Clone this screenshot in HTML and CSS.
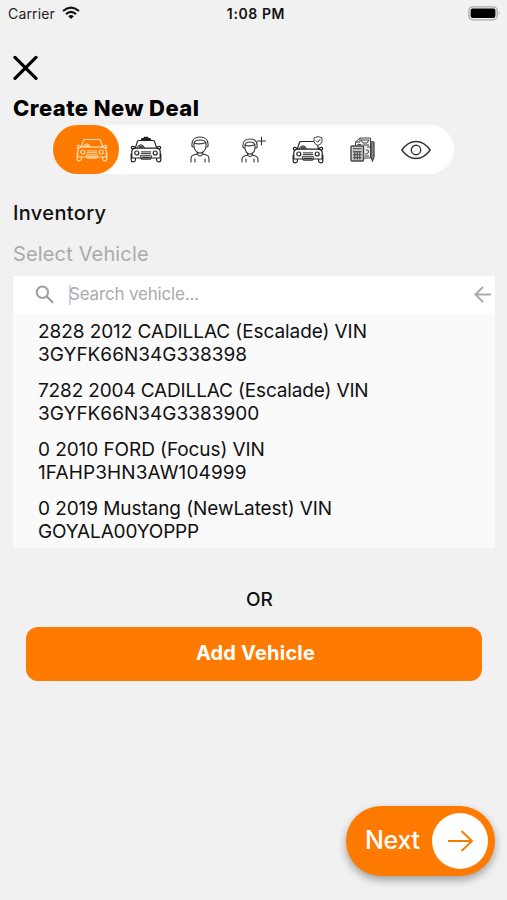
FILE: index.html
```html
<!DOCTYPE html>
<html lang="en">
<head>
<meta charset="utf-8">
<title>Create New Deal</title>
<link rel="stylesheet" href="styles.css">
</head>
<body>
<svg class="defs" aria-hidden="true">
  <symbol id="car" viewBox="0 0 32 24">
    <g fill="none" stroke="currentColor" stroke-linejoin="round" stroke-linecap="round">
      <path stroke-width="1.2" d="M5.2 9.4 7.4 2.6Q7.8 1.5 9 1.5H23Q24.2 1.5 24.6 2.6L26.8 9.4M5.4 9.2H26.6Q30.2 10 30.2 12.5V19H1.8V12.5Q1.8 10 5.4 9.2ZM1.2 15V21.2Q1.2 22.8 3.2 22.8T5.4 21.2V19M30.8 15V21.2Q30.8 22.8 28.8 22.8T26.6 21.2V19M5 8.2Q1.6 6.5 1.4 8.4T4 9.7M27 8.2Q30.4 6.5 30.6 8.4T28 9.7"/>
      <circle cx="6.8" cy="14" r="2" stroke-width="1.2"/><circle cx="25.2" cy="14" r="2" stroke-width="1.2"/>
      <path stroke-width="1" d="M11.3 12.9H20.7M11.3 14.7H20.7M10.5 16.8H21.5V17.8L20.7 20.2H11.3L10.5 17.8ZM12.5 18.4H19.5M7.2 8.8Q8 5.8 10.8 5.8T14.4 8.8M9.5 7.2H12.2M9.3 8.2H12.8"/>
    </g>
  </symbol>
</svg>
<div class="screen">
  <header class="status">
    <div class="carrier"><span>Carrier</span>
      <svg width="18" height="14" viewBox="0 0 18 14" fill="none" stroke="#111" stroke-width="2.1"><path d="M1 5Q9-1.8 17 5M4 8.1Q9 3.6 14 8.1"/><path d="M6.2 10.3Q9 7.8 11.8 10.3L9 13Z" fill="#111" stroke="none"/></svg>
    </div>
    <div class="clock">1:08 PM</div>
    <svg class="battery" width="33" height="15" viewBox="0 0 33 15"><rect x=".8" y=".8" width="28.4" height="13" rx="4" fill="none" stroke="#aaa" stroke-width="1.3"/><rect x="2.6" y="2.6" width="24.8" height="9.4" rx="2" fill="#000"/><path d="M30.8 5Q32.5 7.3 30.8 9.6Z" fill="#999"/></svg>
  </header>
  <main>
    <button class="close" aria-label="Close"><svg width="26" height="26" viewBox="0 0 26 26" stroke="#000" stroke-width="3.2" stroke-linecap="round"><path d="M2 2.4 23 23.4M23 2.4 2 23.4"/></svg></button>
    <h1>Create New Deal</h1>
    <nav class="steps">
      <div class="step active"><svg width="32" height="24"><use href="#car"/></svg></div>
      <div class="step"><svg width="32" height="28" viewBox="0 0 32 28"><use href="#car" y="3" width="32" height="24"/><path d="M10.5 4.8 11.5 2H13.5L14 .8H18L18.5 2H20.5L21.5 4.8Z" fill="#222"/></svg></div>
      <div class="step"><svg width="20" height="27" viewBox="0 0 20 27"><g class="person"><path d="M4 8Q4 4 10 4T16 8V10C16 14 13 17 10 17S4 14 4 10ZM4 7Q10 9 16 6.5M3 11Q1.6 11 2 8C2 3 6 1 10 1S18 3 18 8Q18.4 11 17 11M1 26V22Q1 20 3.5 19L7.2 18V16M19 26V22Q19 20 16.5 19L12.8 18V16M7 18Q10 22 13 18M5 23V26M15 23V26"/></g></svg></div>
      <div class="step"><svg width="26" height="27" viewBox="0 0 26 27"><g class="person"><path d="M4 10Q4 6 9 6T14 10V12C14 15 12 18 9 18S4 15 4 12ZM4 9Q9 11 14 8.5M3 12Q1.6 12 2 9C2 5 5 3 9 3S16 5 16 9Q16.4 12 15 12M1 26V23Q1 21 3.5 20L6.6 19V17M17 26V23Q17 21 14.5 20L11.4 19V17M6.5 19Q9 22 11.5 19M5 23V26M13 23V26M20.5 1V9M16.5 5H24.5"/></g></svg></div>
      <div class="step"><svg width="32" height="28" viewBox="0 0 32 28"><use href="#car" y="4" width="32" height="24"/><path d="M22 1.8 26 .6 30 1.8V5.5Q29.8 8 26 9.5Q22.2 8 22 5.5Z" fill="#fff" stroke="#444"/><path d="M24 4.5 25.6 6.2 28.3 3" fill="none" stroke="#333"/></svg></div>
      <div class="step"><svg width="25" height="25" viewBox="0 0 25 25" fill="none" stroke="#444" stroke-width="1"><path d="M5.5 9V5L10 1H20.5V21H14" fill="#eee"/><path d="M5.5 5H10V1M11 3H19L17 6H13ZM12.5 8H19M7.5 7.5H11M17 10H20M16 13Q19 12.5 18.5 15T15 17M15 19H19"/><rect x="1" y="9" width="12.5" height="15" rx="1" fill="#ccc" stroke-width="1.4"/><path d="M3 11.7H11.5M3 14.8H11.5M3 17.8H11.5M3 20.8H11.5M4.8 14V22.5M7.3 14V22.5M9.8 14V22.5" stroke-width="1.1"/><path d="M21 5.5Q22.5 3.5 24 5.5V20L22.5 24 21 20Z" fill="#888" stroke-width="1.2"/></svg></div>
      <div class="step"><svg width="30" height="20" viewBox="0 0 30 20" fill="none" stroke="#333" stroke-width="1.4"><path d="M.8 10Q7 1.5 15 1.5T29.2 10Q23 18.5 15 18.5T.8 10Z"/><circle cx="15" cy="10" r="4.7"/></svg></div>
    </nav>
    <h2>Inventory</h2>
    <p class="label">Select Vehicle</p>
    <section class="picker">
      <div class="search">
        <svg class="lens" width="20" height="20" viewBox="0 0 20 20" fill="none" stroke="#a0a0a0" stroke-width="2"><circle cx="7.4" cy="7.2" r="5.7"/><path d="M11.5 11.3 18 17.8" stroke-width="2.3"/></svg>
        <span class="caret"></span>
        <span class="placeholder">Search vehicle...</span>
        <svg class="back" width="18" height="18" viewBox="0 0 18 18" fill="none" stroke="#aaa" stroke-width="2"><path d="M17 8.5H2M9 1 1.5 8.5 9 16"/></svg>
      </div>
      <ul>
        <li><span class="tight">2828 2012 CADILLAC (Escalade) VIN</span><br>3GYFK66N34G338398</li>
        <li><span class="tighter">7282 2004 CADILLAC (Escalade) VIN</span><br>3GYFK66N34G3383900</li>
        <li><span class="tight">0 2010 FORD (Focus) VIN</span><br><span class="wide">1FAHP3HN3AW104999</span></li>
        <li><span class="tight">0 2019 Mustang (NewLatest) VIN</span><br><span class="tighter">GOYALA00YOPPP</span></li>
      </ul>
    </section>
    <p class="or">OR</p>
    <button class="add">Add Vehicle</button>
  </main>
  <button class="next"><span>Next</span><i><svg width="27" height="22" viewBox="0 0 27 22" fill="none" stroke="#f57c00" stroke-width="1.9"><path d="M1 11H25M14.5 1 25 11 14.5 21"/></svg></i></button>
</div>
</body>
</html>
```

FILE: styles.css
```css
* { box-sizing: border-box; }
body { margin: 0; background: #f1f1f1; color: #111; font-family: Inter, "Liberation Sans", sans-serif; }
button { border: 0; padding: 0; font: inherit; }
h1, h2, p, ul { margin: 0; padding: 0; }
svg { display: block; flex: none; }
.defs { position: absolute; width: 0; height: 0; }
.screen { width: 507px; height: 900px; display: flex; flex-direction: column; overflow: hidden; }
.status { height: 28px; padding: 0 6px 2px 8px; display: grid; grid-template-columns: 1fr auto 1fr; align-items: center; font-size: 14px; }
.carrier { display: flex; align-items: center; gap: 7px; letter-spacing: .15px; color: #222; }
.clock { padding-left: 3px; font-size: 14px; font-weight: 600; letter-spacing: .6px; }
.battery { justify-self: end; }
main { flex: 1; padding: 27px 12px 0 13px; }
.close { display: block; width: 26px; height: 26px; background: none; }
h1 { height: 44px; line-height: 54px; font-size: 22px; font-weight: 800; letter-spacing: .45px; color: #000; white-space: nowrap; }
.steps { width: 401px; height: 49px; margin-left: 40px; display: flex; background: #fff; border-radius: 25px; }
.step { width: 54px; display: flex; align-items: center; justify-content: center; color: #222; }
.step.active { width: 66px; padding-left: 12px; padding-top: 1px; border-radius: 25px; background: #ff7a00; color: #ffdcae; }
.person { fill: none; stroke: #333; stroke-width: 1.1; stroke-linecap: round; }
h2 { margin-top: 22px; height: 34px; line-height: 34px; font-size: 20px; font-weight: 500; letter-spacing: .35px; }
.label { height: 46px; line-height: 49px; font-size: 20px; letter-spacing: .15px; color: #aaa; }
.picker { width: 482px; background: #fafafa; }
.search { height: 37px; background: #fff; padding: 0 3px 0 22px; display: flex; align-items: center; }
.caret { width: 2px; height: 20px; margin-left: 14px; background: #c5d2f4; }
.placeholder { margin: -2px 0 0 -2px; font-size: 17px; letter-spacing: -.18px; color: #aaa; }
.back { margin-left: auto; }
ul { height: 235px; list-style: none; }
li { height: 59px; padding: 7px 25px 5px; font-size: 19px; line-height: 23px; white-space: nowrap; }
.tight { letter-spacing: -.08px; }
.tighter { letter-spacing: -.15px; }
.wide { letter-spacing: .12px; }
.or { height: 79px; padding-left: 11px; line-height: 103px; text-align: center; font-size: 19px; font-weight: 500; }
.add { display: block; width: 456px; height: 54px; margin-left: 13px; padding-bottom: 2px; padding-left: 3px; border-radius: 12px; background: #ff7a00; color: #fff; font-size: 20px; font-weight: 700; letter-spacing: .2px; }
.next { align-self: flex-end; flex: none; width: 149px; height: 70px; margin: 0 12px 24px 0; padding: 0 7px 0 19px; display: flex; align-items: center; justify-content: space-between; border-radius: 35px; background: #ff7a00; color: #fff; font-size: 25px; font-weight: 500; letter-spacing: -.3px; box-shadow: 0 4px 8px rgba(0,0,0,.35); }
.next span { padding-bottom: 3px; }
.next i { width: 56px; height: 56px; border-radius: 50%; background: #fff; display: flex; align-items: center; justify-content: center; }
```
